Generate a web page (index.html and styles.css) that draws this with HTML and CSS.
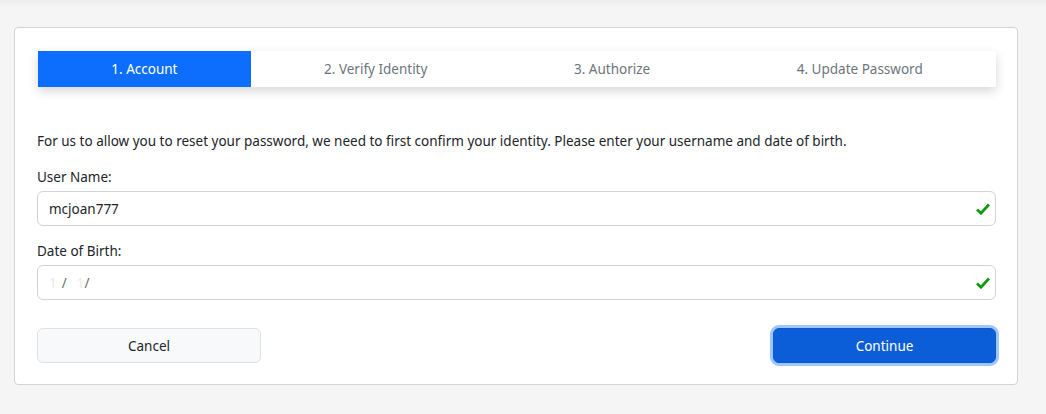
FILE: index.html
```html
<!DOCTYPE html>
<html>
<head>
<meta charset="utf-8">
<link rel="stylesheet" href="styles.css">
</head>
<body>
<div class="topshade"></div>
<div class="card">
  <div class="steps">
    <div class="step active">1. Account</div>
    <div class="step">2. Verify Identity</div>
    <div class="step">3. Authorize</div>
    <div class="step">4. Update Password</div>
  </div>
  <p class="intro">For us to allow you to reset your password, we need to first confirm your identity. Please enter your username and date of birth.</p>
  <label class="label">User Name:</label>
  <div class="field">
    <span class="value">mcjoan777</span>
    <svg class="check" width="14" height="12" viewBox="0 0 14 12"><path d="M1 6.5 L5 10.2 L13 1.5" fill="none" stroke="#0f9a0f" stroke-width="2.8"/></svg>
  </div>
  <label class="label">Date of Birth:</label>
  <div class="field">
    <span class="value date"><span class="faint">1</span><span class="sl s1">/</span><span class="faint f2">1</span><span class="sl s2">/</span></span>
    <svg class="check" width="14" height="12" viewBox="0 0 14 12"><path d="M1 6.5 L5 10.2 L13 1.5" fill="none" stroke="#0f9a0f" stroke-width="2.8"/></svg>
  </div>
  <div class="actions">
    <button class="btn cancel">Cancel</button>
    <button class="btn primary">Continue</button>
  </div>
</div>
</body>
</html>
```
FILE: styles.css
```css
html, body {
  margin: 0;
  padding: 0;
  background: #f5f5f5;
}
body {
  font-family: "Noto Sans", "Open Sans", sans-serif;
  font-size: 13.5px;
  color: #212529;
  padding: 27px 28px 0 14px;
  position: relative;
  height: 414px;
  box-sizing: border-box;
}
.topshade {
  position: absolute;
  left: 0;
  right: 0;
  top: 0;
  height: 8px;
  background: linear-gradient(#ececec, #f5f5f5);
}
.card {
  position: relative;
  background: #fff;
  border: 1px solid #d3d3d3;
  border-radius: 4px;
  height: 358px;
  box-sizing: border-box;
  padding: 23px 21px 21px 22px;
}
.steps {
  display: flex;
  height: 36px;
  margin-left: 1px;
  background: #fff;
  box-shadow: 0 4px 10px rgba(0,0,0,0.16);
}
.step {
  flex: 1 1 auto;
  display: flex;
  align-items: center;
  justify-content: center;
  color: #6c757d;
  white-space: nowrap;
}
.step.active {
  background: #0d6efd;
  color: #fff;
}
.intro {
  margin: 44px 0 15px;
  line-height: 21px;
}
.label {
  display: block;
  line-height: 21px;
  margin-bottom: 3px;
}
.field {
  height: 35px;
  box-sizing: border-box;
  border: 1px solid #ced4da;
  border-radius: 6px;
  display: flex;
  align-items: center;
  padding: 0 4px 0 11px;
  margin-bottom: 15px;
}
.value {
  flex: 1;
}
.date .faint { color: #ebebeb; }
.date .sl { color: #6d6d6d; }
.date .s1 { margin-left: 5px; }
.date .f2 { margin-left: 10px; }
.date .s2 { margin-left: 0; }
.check { margin-right: 1px; }
.actions {
  display: flex;
  justify-content: space-between;
  margin-top: 28px;
}
.btn {
  font-family: inherit;
  font-size: 13.5px;
  height: 35px;
  border-radius: 6px;
  box-sizing: border-box;
}
.cancel {
  width: 224px;
  background: #f8f9fa;
  border: 1px solid #dee2e6;
  color: #212529;
}
.primary {
  width: 223px;
  background: #0b5ed7;
  border: 1px solid #0a58ca;
  color: #fff;
  box-shadow: 0 0 0 3px #9ec5fe;
}
```
